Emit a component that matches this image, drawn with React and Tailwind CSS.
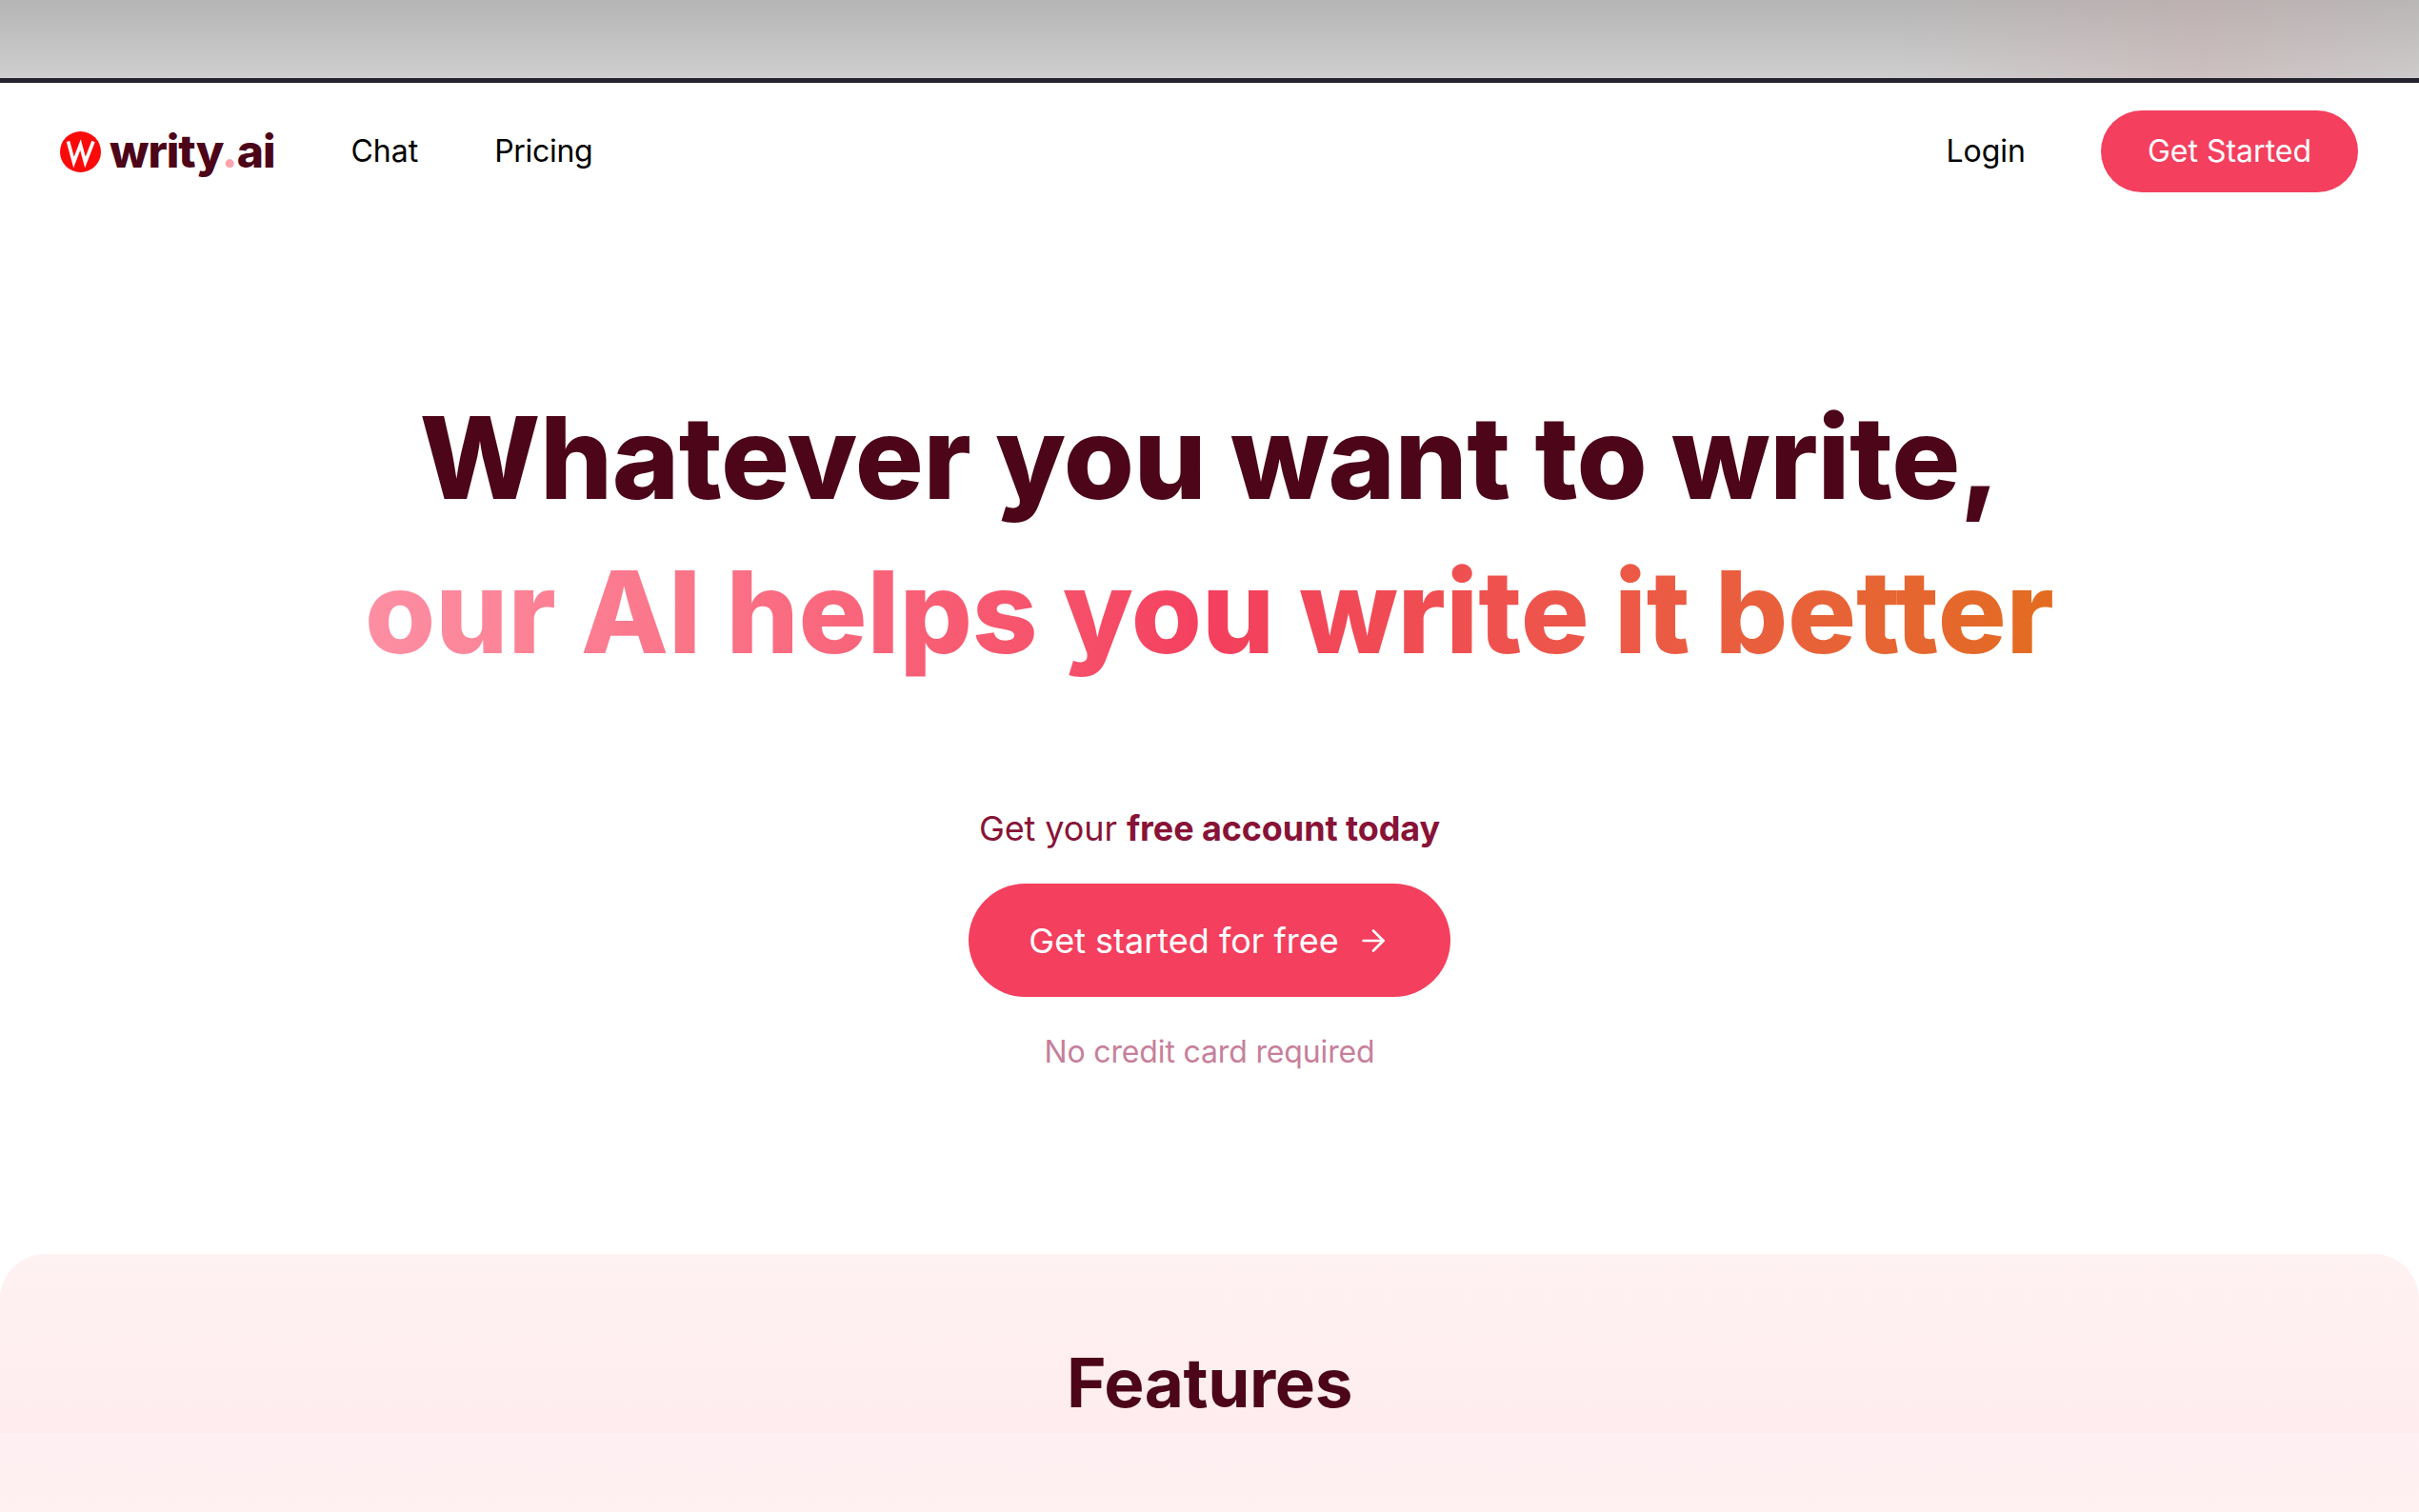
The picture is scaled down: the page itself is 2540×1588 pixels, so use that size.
import { ArrowRight } from "lucide-react";

const Logo = () => (
  <div className="flex items-center gap-[9px]">
    <svg width="43" height="43" viewBox="0 0 43 43" className="shrink-0">
      <circle cx="21.5" cy="21.5" r="21.5" fill="#fb0a0a" />
      <path d="M8.5 10.5 14.5 32.5 21.5 14 26.5 32.5 35 10.5" fill="none" stroke="#fff" strokeWidth="3.6" strokeLinejoin="miter" />
    </svg>
    <span className="text-[48px] leading-none font-extrabold tracking-[-1px] text-[#4c0519]">
      writy<span className="text-[#fda4af]">.</span>ai
    </span>
  </div>
);

const NavBar = () => (
  <nav className="flex h-[141px] items-center justify-between pl-[63px] pr-[64px] pt-[3px]">
    <div className="flex items-center">
      <Logo />
      <a className="ml-[80px] text-[32px] text-black">Chat</a>
      <a className="ml-[80px] text-[32px] tracking-[-0.3px] text-black">Pricing</a>
    </div>
    <div className="flex items-center gap-[79px]">
      <a className="text-[32px] text-black">Login</a>
      <button className="flex h-[86px] w-[270px] items-center justify-center rounded-full bg-[#f43f5e] text-[32px] text-white">
        Get Started
      </button>
    </div>
  </nav>
);

const Hero = () => (
  <section className="flex h-[1089px] flex-col items-center pt-[172px]">
    <h1 className="text-center text-[120px] leading-[162px] font-[850] tracking-[-0.5px] text-[#4c0519]">
      Whatever you want to write,
      <br />
      <span className="bg-gradient-to-r from-[#fd8fa3] via-[#f43f5e] to-[#e36c1f] bg-clip-text tracking-[-0.1px] text-transparent">
        our AI helps you write it better
      </span>
    </h1>
    <p className="mt-[122px] text-[36px] leading-[48px] tracking-[-0.1px] text-[#881337]">
      Get your <span className="font-bold">free account today</span>
    </p>
    <button className="mt-[34px] flex h-[119px] w-[506px] items-center justify-center gap-[18px] rounded-full bg-[#f43f5e] text-[36px] text-white">
      Get started for free
      <ArrowRight size={36} strokeWidth={1.75} />
    </button>
    <p className="mt-[38px] text-[32px] leading-[40px] tracking-[-0.15px] text-[#c77f9b]">No credit card required</p>
  </section>
);

const Features = () => (
  <section className="flex h-[271px] flex-col overflow-hidden rounded-t-[48px] bg-[#fff1f3]">
    <div className="flex h-[188px] shrink-0 items-start justify-center bg-gradient-to-b from-[#fff2f3] to-[#feecee] pt-[91px]">
      <h2 className="text-[71px] leading-[88px] font-bold tracking-[-0.4px] text-[#4c0519]">Features</h2>
    </div>
    <div className="h-[83px] bg-gradient-to-b from-[#fef0f3] to-[#fff1f1]" />
  </section>
);

export default function App() {
  return (
    <div className="h-[1588px] w-full overflow-hidden bg-white font-['Inter',sans-serif]">
      <div className="h-[87px] border-b-[5px] border-[#24242e] bg-gradient-to-b from-[#b5b5b5] to-[#cfcfcf]">
        <div className="h-full bg-gradient-to-r from-transparent from-[78%] via-[#c9a9ab]/40 via-[91%] to-[#c9b9ba]/20" />
      </div>
      <NavBar />
      <Hero />
      <Features />
    </div>
  );
}
